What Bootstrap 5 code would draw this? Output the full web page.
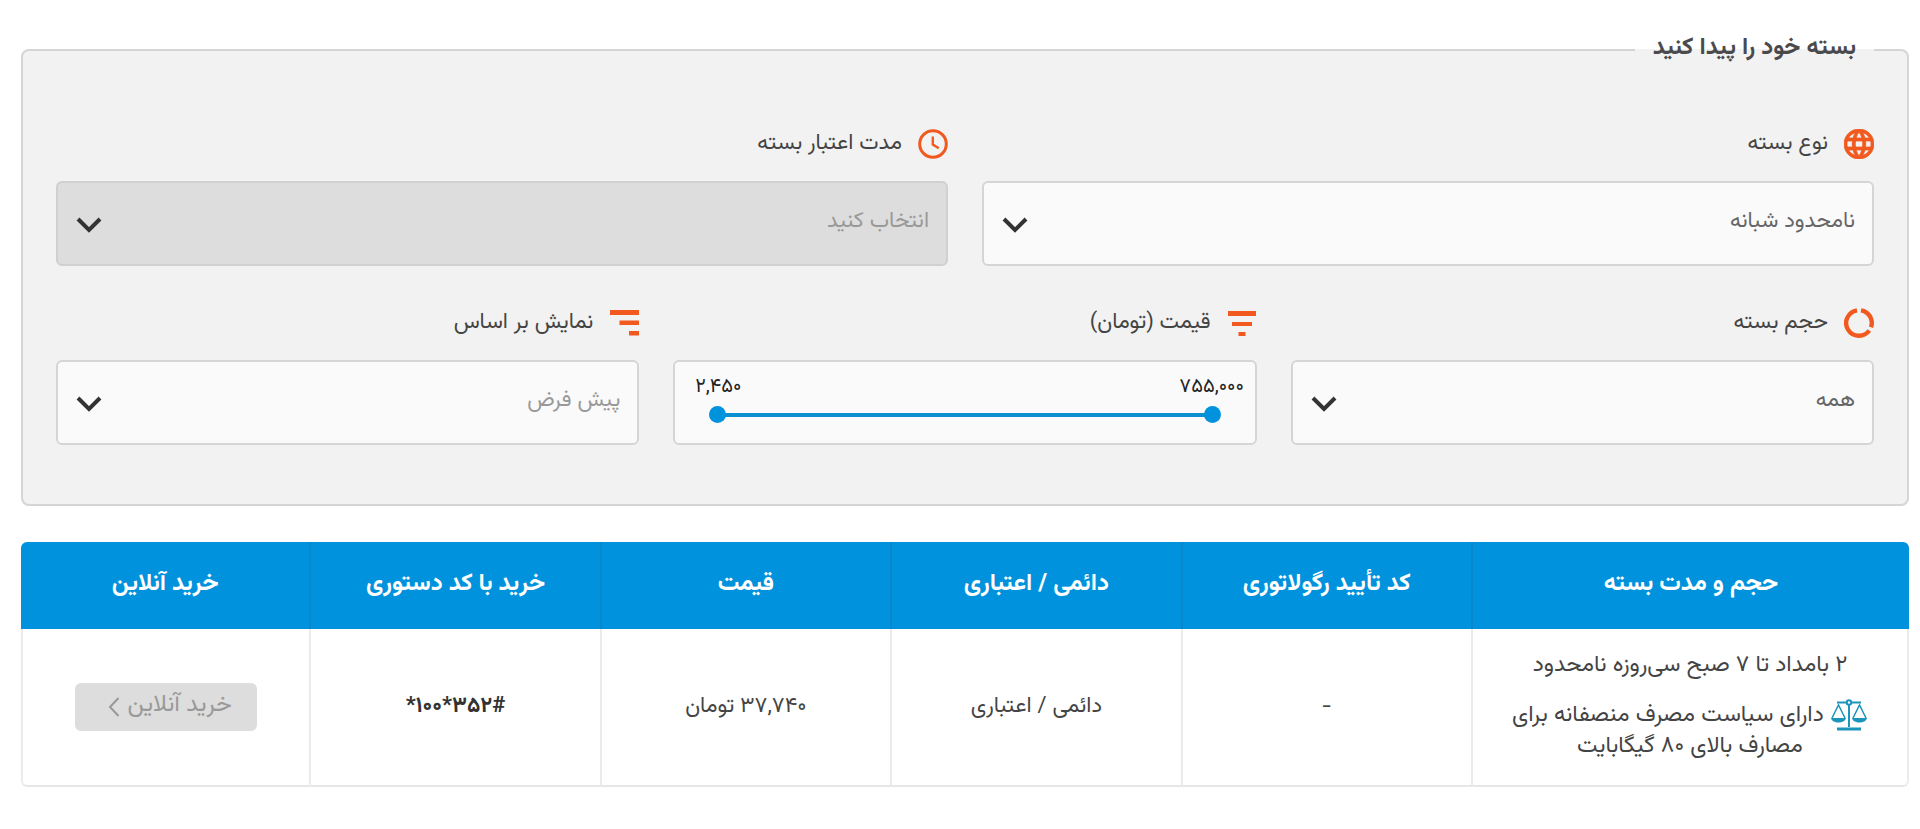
<!DOCTYPE html>
<html lang="fa" dir="rtl">
<head>
<meta charset="utf-8">
<meta name="viewport" content="width=device-width, initial-scale=1">
<title>بسته خود را پیدا کنید</title>
<link href="https://cdn.jsdelivr.net/npm/bootstrap@5.3.0/dist/css/bootstrap.min.css" rel="stylesheet">
<style>
  body { font-family: Vazirmatn, Vazir, "Noto Sans Arabic", "DejaVu Sans", sans-serif; font-size: 22px; line-height: 30px; color: #444; }
  .page { padding: 26px 11px 0 21px; }

  .finder { border: 2px solid #d5d5d5; border-radius: 8px; background: #f2f2f2; padding: 50px 33px 59px; margin-bottom: 36px; }
  .finder legend { float: none; width: auto; margin: 0; padding: 0 18px 4px; font-size: 24px; line-height: 44px; font-weight: 700; color: #4a4a4d; }
  .finder .row { --bs-gutter-x: 34px; --bs-gutter-y: 37px; }
  .field-label { display: flex; align-items: center; gap: 16px; height: 40px; margin-bottom: 17px; color: #444; }
  .field-label svg { width: 30px; height: 30px; flex: none; fill: #f1591f; }

  .picker, .range-box { height: 85px; border: 2px solid #d5d5d5; border-radius: 6px; background-color: #fafafa; }
  .picker { padding: 0 17px 4px 60px; font-size: 22px; color: #666;
    background-image: url("data:image/svg+xml,%3Csvg xmlns='http://www.w3.org/2000/svg' viewBox='0 0 26 16'%3E%3Cpath d='M2 2l11 11L24 2' fill='none' stroke='%23333' stroke-width='4'/%3E%3C/svg%3E");
    background-position: left 18px top 34px; background-size: 26px 16px; }
  .picker.unset { color: #999; }
  .picker:disabled { background-color: #ddd; border-color: #d0d0d0; color: #999; opacity: 1; }

  .range-box { padding-top: 10px; }
  .range-values { display: flex; justify-content: space-between; font-size: 20px; line-height: 30px; color: #222; }
  .range-values output { width: 86px; text-align: center; }
  .range-track { position: relative; height: 17px; margin: 4px 34px 0; }
  .range-track::before { content: ""; position: absolute; top: 7px; left: 8px; right: 8px; height: 4px; background: #0c8fd0; }
  .range-track input { position: absolute; inset: 0; width: 100%; height: 17px; margin: 0; appearance: none; background: none; pointer-events: none; }
  .range-track input::-webkit-slider-thumb { appearance: none; width: 17px; height: 17px; border: 0; border-radius: 50%; background: #0092dc; pointer-events: auto; }
  .range-track input::-moz-range-thumb { width: 17px; height: 17px; border: 0; border-radius: 50%; background: #0092dc; pointer-events: auto; }

  .offers { border-radius: 6px; overflow: hidden; }
  .offers .table { table-layout: fixed; border-collapse: separate; border-spacing: 0; color: #444; }
  .offers th, .offers td { text-align: center; vertical-align: middle; border: 0; }
  .offers th + th { border-right: 2px solid #0a87cb; }
  .offers th { height: 87px; padding: 0 12px 4px; background: #0092dc; color: #fff; font-size: 24px; font-weight: 700; }
  .offers td { height: 158px; padding: 0 12px; background: #fff; border-right: 2px solid #ebebeb; border-bottom: 2px solid #e6e6e6; }
  .offers td:last-child { border-left: 2px solid #ebebeb; border-bottom-left-radius: 6px; }
  .offers td:first-child { padding: 20px 34px 24px; font-size: 23px; border-bottom-right-radius: 6px; }
  .offers .wide { width: 23.1%; }
  .offers .policy { margin: 19px 0 0; }
  .offers .policy svg { width: 38px; height: 32px; vertical-align: middle; fill: none; stroke: #1d94bb; stroke-width: 2; }
  .offers .code { font-weight: 700; color: #333; }
  .buy { display: inline-flex; align-items: center; justify-content: center; gap: 7px; height: 48px; width: 182px; padding: 0 0 4px 8px; border: 0; border-radius: 6px; font-size: 24px; --bs-btn-disabled-bg: #ddd; --bs-btn-disabled-color: #999; --bs-btn-disabled-opacity: 1; }
  .buy svg { width: 12px; height: 20px; margin-top: 4px; fill: none; stroke: currentColor; stroke-width: 2; }
</style>
</head>
<body>
<main class="page">
  <form>
    <fieldset class="finder">
      <legend>بسته خود را پیدا کنید</legend>
      <div class="row">
        <div class="col-6">
          <label class="field-label" for="kind">
            <svg viewBox="2 2 20 20" aria-hidden="true"><path stroke="#f1591f" stroke-width=".5" d="M11.99 2C6.47 2 2 6.48 2 12s4.47 10 9.99 10C17.52 22 22 17.52 22 12S17.52 2 11.99 2zm6.93 6h-2.950c-.32-1.250-.78-2.450-1.380-3.560 1.840.63 3.370 1.910 4.330 3.560zM12 4.040c.83 1.200 1.480 2.530 1.910 3.960h-3.820c.43-1.430 1.080-2.760 1.910-3.960zM4.260 14C4.100 13.360 4 12.690 4 12s.1-1.360.26-2h3.380c-.08.66-.14 1.320-.14 2s.06 1.340.14 2H4.260zm.82 2h2.950c.32 1.250.78 2.450 1.380 3.560-1.840-.63-3.370-1.900-4.330-3.560zm2.950-8H5.080c.96-1.660 2.490-2.930 4.330-3.560C8.810 5.550 8.350 6.750 8.030 8zM12 19.960c-.83-1.200-1.480-2.530-1.910-3.960h3.820c-.43 1.430-1.080 2.760-1.910 3.960zM14.340 14H9.660c-.09-.66-.16-1.320-.16-2s.07-1.350.16-2h4.680c.09.65.16 1.320.16 2s-.07 1.340-.16 2zm.25 5.560c.6-1.110 1.060-2.310 1.380-3.560h2.950c-.96 1.650-2.490 2.930-4.330 3.560zM16.360 14c.08-.66.14-1.320.14-2s-.06-1.340-.14-2h3.380c.16.64.26 1.310.26 2s-.1 1.360-.26 2h-3.380z"/></svg>
            نوع بسته
          </label>
          <select class="form-select picker" id="kind"><option>نامحدود شبانه</option></select>
        </div>
        <div class="col-6">
          <label class="field-label" for="duration">
            <svg viewBox="0 0 30 30" aria-hidden="true"><g fill="none" stroke="#f1591f"><circle cx="15" cy="15" r="13.3" stroke-width="3"/><path d="M14.800 7.500v8l6 3.800" stroke-width="2.400"/></g></svg>
            مدت اعتبار بسته
          </label>
          <select class="form-select picker" id="duration" disabled><option>انتخاب کنید</option></select>
        </div>
        <div class="col-4">
          <label class="field-label" for="volume">
            <svg viewBox="0 0 30 30" aria-hidden="true"><g fill="none" stroke="#f1591f" stroke-width="4.400"><path d="M17 2.300A12.800 12.800 0 0 1 27 19.300"/><path d="M25.300 22.500A12.800 12.800 0 1 1 13 2.300"/></g></svg>
            حجم بسته
          </label>
          <select class="form-select picker" id="volume"><option>همه</option></select>
        </div>
        <div class="col-4">
          <label class="field-label" for="price-min">
            <svg viewBox="0 0 30 30" aria-hidden="true"><path d="M1 3h28v5H1zM5 14h20v4H5zM11.500 24h7v4h-7z"/></svg>
            قیمت (تومان)
          </label>
          <div class="range-box" dir="ltr">
            <div class="range-values"><output for="price-min">۲,۴۵۰</output><output for="price-max">۷۵۵,۰۰۰</output></div>
            <div class="range-track">
              <input type="range" id="price-min" min="2450" max="755000" value="2450" aria-label="کمترین قیمت">
              <input type="range" id="price-max" min="2450" max="755000" value="755000" aria-label="بیشترین قیمت">
            </div>
          </div>
        </div>
        <div class="col-4">
          <label class="field-label" for="sort">
            <svg viewBox="0 0 30 30" aria-hidden="true"><path d="M1 2h29v5H1zM10.500 12.500h19.500v4.500H10.500zM20 23h10v4.500H20z"/></svg>
            نمایش بر اساس
          </label>
          <select class="form-select picker unset" id="sort"><option>پیش فرض</option></select>
        </div>
      </div>
    </fieldset>
  </form>

  <div class="offers">
    <table class="table mb-0">
      <thead>
        <tr>
          <th scope="col" class="wide">حجم و مدت بسته</th>
          <th scope="col">کد تأیید رگولاتوری</th>
          <th scope="col">دائمی / اعتباری</th>
          <th scope="col">قیمت</th>
          <th scope="col">خرید با کد دستوری</th>
          <th scope="col">خرید آنلاین</th>
        </tr>
      </thead>
      <tbody>
        <tr>
          <td>
            ۲ بامداد تا ۷ صبح سی‌روزه نامحدود
            <p class="policy">
              <svg viewBox="0 0 38 32" aria-hidden="true"><path d="M7 3.500h9.500M21.500 3.500H31M19 6v22"/><circle cx="19" cy="3.500" r="2.200"/><path d="M7 30h24" stroke-width="3"/><path d="M2 19L8.500 6 15 19M23 19l6.500-13L36 19" stroke-width="1.500"/><path d="M1 19h15c-1 6-14 6-15 0zM22 19h15c-1 6-14 6-15 0z" fill="#1d94bb" stroke="none"/></svg>
              دارای سیاست مصرف منصفانه برای مصارف بالای ۸۰ گیگابایت
            </p>
          </td>
          <td>-</td>
          <td>دائمی / اعتباری</td>
          <td>۳۷,۷۴۰ تومان</td>
          <td class="code"><bdo dir="ltr">*۱۰۰*۳۵۲#</bdo></td>
          <td>
            <button type="button" class="btn buy" disabled>خرید آنلاین <svg viewBox="0 0 12 20" aria-hidden="true"><path d="M10.500 1L2 10l8.500 9"/></svg></button>
          </td>
        </tr>
      </tbody>
    </table>
  </div>
</main>
<script src="https://cdn.jsdelivr.net/npm/bootstrap@5.3.0/dist/js/bootstrap.bundle.min.js"></script>
</body>
</html>
